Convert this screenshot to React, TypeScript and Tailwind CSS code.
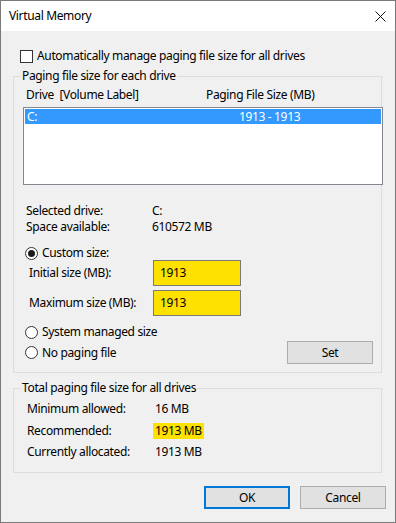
const Radio = ({ checked = false }: { checked?: boolean }) => (
  <span className="flex h-[13px] w-[13px] shrink-0 items-center justify-center rounded-full border border-[#333333] bg-white">
    {checked && <span className="h-[7px] w-[7px] rounded-full bg-[#1a1a1a]" />}
  </span>
);

const GroupBox = ({
  title,
  className,
  children,
}: {
  title: string;
  className?: string;
  children: React.ReactNode;
}) => (
  <div className={`relative w-[369px] border border-[#dcdcdc] ${className ?? ""}`}>
    {/* legend sits over the top border */}
    <div className="absolute -top-[9px] left-[7px] bg-[#f0f0f0] px-[1px] leading-[16px]">{title}</div>
    {children}
  </div>
);

const Button = ({ label, primary = false }: { label: string; primary?: boolean }) => (
  <button
    className={`flex h-[23px] w-[86px] items-center justify-center bg-[#e1e1e1] leading-[16px] ${
      primary ? "border-2 border-[#0078d7]" : "border border-[#adadad]"
    }`}
  >
    {label}
  </button>
);

export default function App() {
  return (
    <div className="flex h-[523px] w-[396px] flex-col border border-[#7a7a7a] bg-[#f0f0f0] font-['Segoe_UI','Noto_Sans',sans-serif] text-[12px] tracking-[-0.35px] text-black">
      {/* title bar */}
      <div className="flex h-[30px] shrink-0 items-center justify-between bg-white pl-[8px] pr-[9px]">
        <span className="leading-[16px]">Virtual Memory</span>
        <svg width="11" height="11" viewBox="0 0 11 11">
          <path d="M0.5 0.5 L10.5 10.5 M10.5 0.5 L0.5 10.5" stroke="#111" strokeWidth="1" />
        </svg>
      </div>

      <div className="flex flex-col pl-[12px]">
        {/* auto manage checkbox */}
        <div className="mt-[18px] flex h-[14px] items-center gap-[4px] pl-[7px] leading-[16px]">
          <span className="h-[13px] w-[13px] border border-[#333333] bg-white" />
          <span>Automatically manage paging file size for all drives</span>
        </div>

        <GroupBox title="Paging file size for each drive" className="mt-[13px]">
          <div className="flex pl-[12px] pt-[10px] leading-[16px]">
            <span className="w-[180px] whitespace-pre">Drive  [Volume Label]</span>
            <span>Paging File Size (MB)</span>
          </div>

          <div className="-mr-[2px] ml-[9px] mt-[4px] h-[78px] border border-[#828790] bg-white p-[1px]">
            <div className="flex h-[15px] items-center bg-[#3399ff] pl-[2px] leading-[15px] text-white">
              <span className="w-[212px]">C:</span>
              <span>1913 - 1913</span>
            </div>
          </div>

          <div className="mt-[18px] flex flex-col pl-[12px] leading-[16px]">
            <div className="flex">
              <span className="w-[126px]">Selected drive:</span>
              <span>C:</span>
            </div>
            <div className="flex">
              <span className="w-[126px]">Space available:</span>
              <span>610572 MB</span>
            </div>
          </div>

          <div className="mt-[11px] flex h-[14px] items-center gap-[4px] pl-[11px] leading-[16px]">
            <Radio checked />
            <span>Custom size:</span>
          </div>

          <div className="flex h-[26px] items-center pl-[15px]">
            <span className="w-[124px] leading-[16px]">Initial size (MB):</span>
            <div className="flex h-[26px] w-[88px] items-center border border-[#7a7a7a] bg-[#ffe100] pl-[6px] leading-[16px]">
              1913
            </div>
          </div>

          <div className="mt-[4px] flex h-[26px] items-center pl-[15px]">
            <span className="w-[124px] leading-[16px]">Maximum size (MB):</span>
            <div className="flex h-[26px] w-[88px] items-center border border-[#7a7a7a] bg-[#ffe100] pl-[6px] leading-[16px]">
              1913
            </div>
          </div>

          <div className="mt-[9px] flex h-[14px] items-center gap-[4px] pl-[11px] leading-[16px]">
            <Radio />
            <span>System managed size</span>
          </div>

          <div className="mb-[8px] mt-[2px] flex h-[23px] items-center justify-between pl-[11px] pr-[8px]">
            <div className="flex items-center gap-[4px] leading-[16px]">
              <Radio />
              <span>No paging file</span>
            </div>
            <Button label="Set" />
          </div>
        </GroupBox>

        <GroupBox title="Total paging file size for all drives" className="mt-[15px]">
          <div className="flex flex-col pb-[12px] pl-[13px] pt-[12px] leading-[16px]">
            <div className="flex">
              <span className="w-[126px]">Minimum allowed:</span>
              <span className="px-[2px]">16 MB</span>
            </div>
            <div className="mt-[6px] flex">
              <span className="w-[126px]">Recommended:</span>
              <span className="bg-[#ffe100] px-[2px]">1913 MB</span>
            </div>
            <div className="mt-[5px] flex">
              <span className="w-[126px]">Currently allocated:</span>
              <span className="px-[2px]">1913 MB</span>
            </div>
          </div>
        </GroupBox>
      </div>

      <div className="mt-[13px] flex justify-end gap-[10px] pr-[9px]">
        <Button label="OK" primary />
        <Button label="Cancel" />
      </div>
    </div>
  );
}
